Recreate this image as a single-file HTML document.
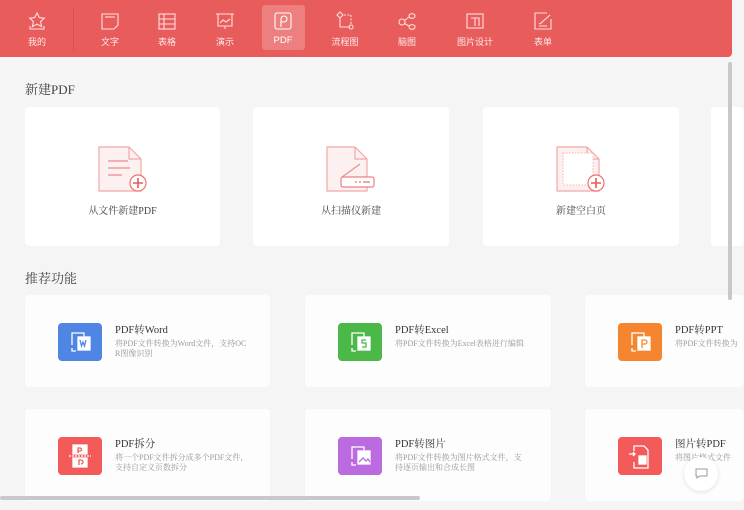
<!DOCTYPE html>
<html><head><meta charset="utf-8"><style>
*{margin:0;padding:0;box-sizing:border-box}
body{width:744px;height:510px;overflow:hidden;background:#f5f5f5;font-family:"Liberation Sans","Noto Sans CJK SC",sans-serif;position:relative}
.hdr{position:absolute;left:0;top:0;width:732px;height:57px;background:#e95c5c;border-radius:0 0 4px 0}
.tab{position:absolute;top:0;height:57px;text-align:center;color:#fde8e8;font-size:9px}
.tab svg{position:absolute;top:11px;left:50%;margin-left:-10px}
.tab span{position:absolute;top:35px;left:0;right:0}
.sel{position:absolute;left:262px;top:5px;width:43px;height:45px;background:rgba(255,255,255,.22);border-radius:3px}
.sec{position:absolute;left:25px;font-family:"Liberation Serif","Noto Serif CJK SC",serif;font-size:13px;color:#444}
.card{position:absolute;background:#fff;border-radius:4px}
.lbl{position:absolute;left:0;right:0;top:95px;text-align:center;font-size:10px;color:#444;font-family:"Liberation Serif","Noto Serif CJK SC",serif}
.doc{position:absolute;left:72px;top:38px}
.fc{position:absolute;background:#fdfdfd;border-radius:4px;overflow:hidden}
.ic{position:absolute;left:33px;top:28px;width:44px;height:38px;border-radius:4px}
.t{position:absolute;left:90px;top:27px;font-family:"Liberation Serif","Noto Serif CJK SC",serif;font-size:10.5px;color:#333;white-space:nowrap}
.d{position:absolute;left:90px;top:44px;width:134px;font-size:8px;line-height:10px;color:#999;font-family:"Liberation Serif","Noto Serif CJK SC",serif;word-break:break-all}
</style></head><body>
<div class="hdr">
<div class="sel"></div>
<div style="position:absolute;left:73px;top:8px;width:1px;height:42px;background:#d85050"></div>
<div class="tab" style="left:17px;width:40px"><svg width="20" height="20" viewBox="0 0 20 20" fill="none" stroke="#fde0e0" stroke-width="1.1"><path d="M10 2l2.3 4.6 5 .6-3.7 3.4 1 5-4.6-2.5-4.6 2.5 1-5L2.7 7.2l5-.6z"/><path d="M3 15v3h14v-3"/></svg><span>我的</span></div>
<div class="tab" style="left:90px;width:40px"><svg width="20" height="20" viewBox="0 0 20 20" fill="none" stroke="#fde0e0" stroke-width="1.1"><path d="M2 3h16v11l-4 4H2z"/><path d="M5 6h10"/></svg><span>文字</span></div>
<div class="tab" style="left:147px;width:40px"><svg width="20" height="20" viewBox="0 0 20 20" fill="none" stroke="#fde0e0" stroke-width="1.1"><rect x="2" y="3" width="16" height="15"/><path d="M2 8h16M2 13h16M7 3v15"/></svg><span>表格</span></div>
<div class="tab" style="left:205px;width:40px"><svg width="20" height="20" viewBox="0 0 20 20" fill="none" stroke="#fde0e0" stroke-width="1.1"><path d="M1 3h18M3 3v12h14V3M10 15v3"/><path d="M5 12l3-3 3 2 4-3"/></svg><span>演示</span></div>
<div class="tab" style="left:263px;width:40px;color:#fff"><svg width="20" height="20" viewBox="0 0 20 20" fill="none" stroke="#fff" stroke-width="1.1"><rect x="2" y="2" width="16" height="16" rx="2"/><path d="M8 16V8a3 3 0 1 1 3 3H8"/></svg><span style="font-size:9.5px">PDF</span></div>
<div class="tab" style="left:325px;width:40px"><svg width="20" height="20" viewBox="0 0 20 20" fill="none" stroke="#fde0e0" stroke-width="1.1"><path d="M5 1l3 3-3 3-3-3z"/><path d="M5 7v9h10"/><circle cx="16" cy="16" r="2"/><path d="M9 4h7v10" stroke-dasharray="2 1.5"/></svg><span>流程图</span></div>
<div class="tab" style="left:387px;width:40px"><svg width="20" height="20" viewBox="0 0 20 20" fill="none" stroke="#fde0e0" stroke-width="1.1"><circle cx="5" cy="11" r="3"/><ellipse cx="15" cy="5" rx="3" ry="2.3"/><ellipse cx="15" cy="16" rx="3" ry="2.3"/><path d="M7.5 9.5L12 6M7.5 12.5L12 15"/></svg><span>脑图</span></div>
<div class="tab" style="left:450px;width:50px"><svg width="20" height="20" viewBox="0 0 20 20" fill="none" stroke="#fde0e0" stroke-width="1.1"><rect x="2" y="3" width="16" height="14"/><path d="M6 7h8v8M10 7v8"/></svg><span>图片设计</span></div>
<div class="tab" style="left:523px;width:40px"><svg width="20" height="20" viewBox="0 0 20 20" fill="none" stroke="#fde0e0" stroke-width="1.1"><path d="M18 8v10H2V2h12"/><path d="M6 13l2-1 9-8M6 15h8"/></svg><span>表单</span></div>
</div>

<div class="sec" style="top:79px">新建PDF</div>
<div class="card" style="left:25px;top:107px;width:195px;height:139px">
<svg class="doc" width="52" height="50" viewBox="0 0 52 50"><path d="M2 2h30l12 12v32H2z" fill="#fdf0f0" stroke="#f3a7a7" stroke-width="1.2"/><path d="M32 2v12h12" fill="none" stroke="#f3a7a7" stroke-width="1.2"/><path d="M11 16h20M11 23h22M11 30h14" stroke="#f08a8a" stroke-width="1.2"/><circle cx="41" cy="38" r="8" fill="#fff" stroke="#ee7070" stroke-width="1.2"/><path d="M36 38h10M41 33v10" stroke="#e85a5a" stroke-width="1.6"/></svg>
<div class="lbl">从文件新建PDF</div></div>
<div class="card" style="left:253px;top:107px;width:196px;height:139px">
<svg class="doc" width="52" height="50" viewBox="0 0 52 50"><path d="M2 2h28l12 12v32H2z" fill="#fdf0f0" stroke="#f3a7a7" stroke-width="1.2"/><path d="M30 2v12h12" fill="none" stroke="#f3a7a7" stroke-width="1.2"/><path d="M17 32l18-13" stroke="#f08a8a" stroke-width="1.1"/><rect x="16" y="32" width="33" height="10" rx="2" fill="#fff" stroke="#ee8080" stroke-width="1.2"/><path d="M30 37h2M34 37h2M38 37h7" stroke="#f08a8a" stroke-width="1.6"/></svg>
<div class="lbl">从扫描仪新建</div></div>
<div class="card" style="left:483px;top:107px;width:196px;height:139px">
<svg class="doc" width="52" height="50" viewBox="0 0 52 50"><path d="M2 2h30l12 12v32H2z" fill="#fdf0f0" stroke="#f3a7a7" stroke-width="1.2"/><path d="M32 2v12h12" fill="none" stroke="#f3a7a7" stroke-width="1.2"/><rect x="8" y="8" width="30" height="32" fill="#fff" stroke="#f5b5b5" stroke-dasharray="1.5 1.5"/><circle cx="41" cy="38" r="8" fill="#fff" stroke="#ee7070" stroke-width="1.2"/><path d="M36 38h10M41 33v10" stroke="#e85a5a" stroke-width="1.6"/></svg>
<div class="lbl">新建空白页</div></div>
<div class="card" style="left:711px;top:107px;width:33px;height:139px"></div>

<div class="sec" style="top:268px">推荐功能</div>

<div class="fc" style="left:25px;top:295px;width:245px;height:92px"><div class="ic" style="background:#4f86e3"><svg width="44" height="38" viewBox="0 0 44 38" fill="none" stroke="#fff" stroke-width="1.3"><path d="M14 22v-12h12v4"/><rect x="20" y="14" width="12" height="13" fill="#fff"/><path d="M22 17l1.5 6 1.5-4 1.5 4 1.5-6" stroke="#4f86e3"/><path d="M14 25v3h4"/></svg></div><div class="t">PDF转Word</div><div class="d">将PDF文件转换为Word文件，支持OCR图像识别</div></div>
<div class="fc" style="left:305px;top:295px;width:246px;height:92px"><div class="ic" style="background:#4cb848"><svg width="44" height="38" viewBox="0 0 44 38" fill="none" stroke="#fff" stroke-width="1.3"><path d="M14 22v-12h12v4"/><rect x="20" y="14" width="12" height="13" fill="#fff"/><path d="M28 17h-4v3h4v4h-4" stroke="#4cb848"/><path d="M14 25v3h4"/></svg></div><div class="t">PDF转Excel</div><div class="d">将PDF文件转换为Excel表格进行编辑</div></div>
<div class="fc" style="left:585px;top:295px;width:159px;height:92px"><div class="ic" style="background:#f5862f"><svg width="44" height="38" viewBox="0 0 44 38" fill="none" stroke="#fff" stroke-width="1.3"><path d="M14 22v-12h12v4"/><rect x="20" y="14" width="12" height="13" fill="#fff"/><path d="M24 25v-8h3a2 2 0 0 1 0 4h-3" stroke="#f5862f"/><path d="M14 25v3h4"/></svg></div><div class="t">PDF转PPT</div><div class="d" style="width:80px;white-space:nowrap;overflow:hidden">将PDF文件转换为</div></div>

<div class="fc" style="left:25px;top:409px;width:245px;height:92px"><div class="ic" style="background:#f35a5a"><svg width="44" height="38" viewBox="0 0 44 38" fill="none" stroke="#fff" stroke-width="1.3"><path d="M15 8h14v9H15z" fill="#fff"/><path d="M11 19h22" stroke-dasharray="2 1"/><path d="M15 21h14v9H15z" fill="#fff"/><path d="M20 16v-5h2a1.5 1.5 0 0 1 0 3h-2M21 28v-5h2a2 2 0 0 1 0 4" stroke="#f35a5a"/></svg></div><div class="t">PDF拆分</div><div class="d">将一个PDF文件拆分成多个PDF文件，支持自定义页数拆分</div></div>
<div class="fc" style="left:305px;top:409px;width:246px;height:92px"><div class="ic" style="background:#bb6ae0"><svg width="44" height="38" viewBox="0 0 44 38" fill="none" stroke="#fff" stroke-width="1.3"><path d="M14 22v-12h12v4"/><rect x="20" y="14" width="12" height="13" fill="#fff"/><path d="M21 25l4-4 3 3 2-2 2 3" stroke="#bb6ae0"/><path d="M14 25v3h4"/></svg></div><div class="t">PDF转图片</div><div class="d">将PDF文件转换为图片格式文件，支持逐页输出和合成长图</div></div>
<div class="fc" style="left:585px;top:409px;width:159px;height:92px"><div class="ic" style="background:#f35a5a"><svg width="44" height="38" viewBox="0 0 44 38" fill="none" stroke="#fff" stroke-width="1.3"><path d="M16 14v-5h10l4 4v18H16v-6"/><path d="M11 17h6M15 15l2 2-2 2"/><rect x="21" y="19" width="7" height="8" fill="#fff"/></svg></div><div class="t">图片转PDF</div><div class="d" style="width:80px;white-space:nowrap;overflow:hidden">将图片格式文件</div></div>

<div style="position:absolute;left:684px;top:457px;width:34px;height:34px;border-radius:50%;background:#fff;box-shadow:0 1px 4px rgba(0,0,0,.12)"><svg style="position:absolute;left:11px;top:11px" width="13" height="12" viewBox="0 0 13 12" fill="none" stroke="#999"><path d="M1 1h11v7H5l-3 2V8H1z"/></svg></div>
<div style="position:absolute;left:728px;top:62px;width:4px;height:238px;background:#c8c8c8;border-radius:2px"></div>
<div style="position:absolute;left:0;top:496px;width:420px;height:4px;background:#c8c8c8;border-radius:2px"></div>
</body></html>
